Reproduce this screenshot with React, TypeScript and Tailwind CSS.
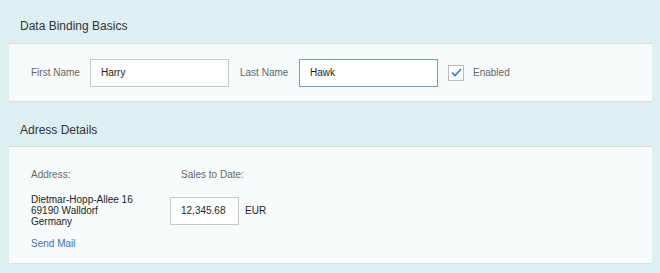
const font = { fontFamily: '"Liberation Sans", Arial, sans-serif' };

function Field({ value, focused, className = "" }: { value: string; focused?: boolean; className?: string }) {
  return (
    <div
      className={`flex h-[28px] items-center border bg-white pl-[10px] text-[10px] text-[#222] ${
        focused ? "border-[#6a9fcf]" : "border-[#c6c9cb]"
      } ${className}`}
    >
      {value}
    </div>
  );
}

export default function App() {
  return (
    <div className="h-[273px] w-[660px] bg-[#deeff2] pl-[9px] pr-[8px]" style={font}>
      {/* Data Binding Basics */}
      <section>
        <h2 className="h-[43px] pl-[11px] pt-[16px] text-[12px] leading-[20px] text-[#333]">
          Data Binding Basics
        </h2>
        <div className="flex h-[58px] items-center border-t border-[#d6dadc] bg-[#f7fbfc] pl-[22px] shadow-[0_1px_1px_rgba(0,0,0,0.06)]">
          <span className="w-[59px] text-[10px] text-[#666]">First Name</span>
          <Field value="Harry" className="w-[139px]" />
          <span className="ml-[11px] w-[59px] text-[10px] text-[#666]">Last Name</span>
          <Field value="Hawk" focused className="w-[139px]" />
          <div className="ml-[10px] flex h-[16px] w-[16px] items-center justify-center border border-[#b9bcbe] bg-white">
            <svg width="11" height="9" viewBox="0 0 11 9" fill="none">
              <path d="M1 4.5 L4 7.5 L10 1" stroke="#2f7fd1" strokeWidth="1.6" />
            </svg>
          </div>
          <span className="ml-[9px] text-[10px] text-[#666]">Enabled</span>
        </div>
      </section>

      {/* Adress Details */}
      <section>
        <h2 className="h-[45px] pl-[11px] pt-[19px] text-[12px] leading-[20px] text-[#333]">
          Adress Details
        </h2>
        <div className="h-[117px] border-t border-[#d6dadc] bg-[#f7fbfc] pl-[22px] pt-[22px] shadow-[0_1px_1px_rgba(0,0,0,0.06)]">
          <div className="flex text-[10px] leading-[12px] text-[#666]">
            <span className="w-[139px]">Address:</span>
            <span className="pl-[11px]">Sales to Date:</span>
          </div>
          <div className="mt-[13px] flex items-center">
            <div className="w-[139px] text-[10px] leading-[11px] text-[#222]">
              <div>Dietmar-Hopp-Allee 16</div>
              <div>69190 Walldorf</div>
              <div>Germany</div>
            </div>
            <Field value="12,345.68" className="h-[27px] w-[69px] pl-[9px]" />
            <span className="ml-[6px] text-[10px] text-[#222]">EUR</span>
          </div>
          <div className="mt-[11px] text-[10px] leading-[12px] text-[#3d72ad]">Send Mail</div>
        </div>
      </section>
    </div>
  );
}
